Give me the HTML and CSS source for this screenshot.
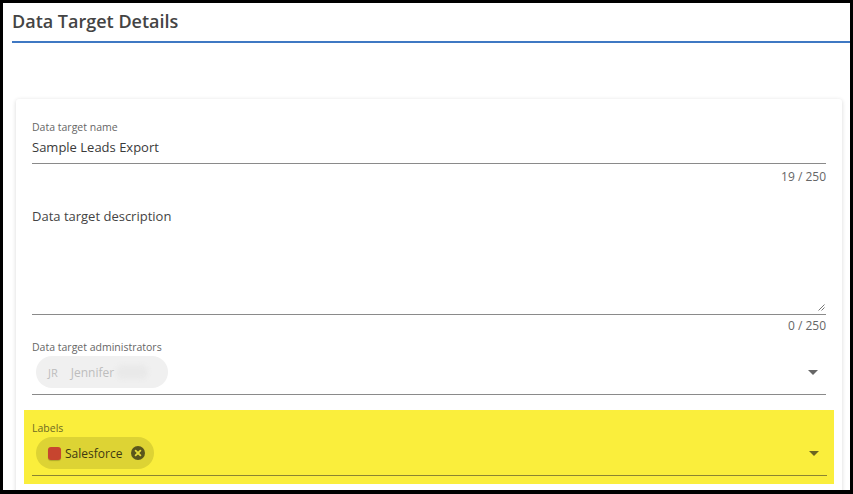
FILE: index.html
```html
<!DOCTYPE html>
<html lang="en">
<head>
    <meta charset="UTF-8">
    <title>Data Target Details</title>
    <link rel="stylesheet" href="styles.css">
</head>
<body>

<div class="frame">
    <header class="page-head">
        <h1>Data Target Details</h1>
    </header>

    <section class="card">
        <div class="field">
            <div class="field-label">Data target name</div>
            <div class="field-input">Sample Leads Export</div>
        </div>
        <div class="hint hint-first">19 / 250</div>

        <div class="field field-area">
            <div class="placeholder">Data target description</div>
            <svg class="grip" width="7" height="7" viewBox="0 0 7 7">
                <path d="M6.5 0.5 L0.5 6.5 M6.5 3.5 L3.5 6.5" stroke="#777" stroke-width="1"/>
            </svg>
        </div>
        <div class="hint hint-second">0 / 250</div>

        <div class="field field-select field-admins">
            <div class="field-label">Data target administrators</div>
            <div class="select-row">
                <span class="chip chip-user">
                    <span class="initials">JR</span>
                    <span class="chip-name">Jennifer</span>
                    <span class="blurred"></span>
                </span>
                <span class="caret"></span>
            </div>
        </div>

        <div class="highlight">
            <div class="field field-select">
                <div class="field-label">Labels</div>
                <div class="select-row">
                    <span class="chip chip-label">
                        <span class="swatch"></span>
                        <span class="chip-name">Salesforce</span>
                        <svg class="remove" width="14" height="14" viewBox="0 0 14 14">
                            <circle cx="7" cy="7" r="7" fill="#5a561c"/>
                            <path d="M4.6 4.6 L9.4 9.4 M9.4 4.6 L4.6 9.4" stroke="#e3d93a" stroke-width="1.8" stroke-linecap="round"/>
                        </svg>
                    </span>
                    <span class="caret"></span>
                </div>
            </div>
        </div>
    </section>
</div>

</body>
</html>
```

FILE: styles.css
```css
html, body {
    margin: 0;
    padding: 0;
}

body {
    background: #000;
    font-family: "Open Sans", "Liberation Sans", Arial, sans-serif;
    color: #333;
}

.frame {
    box-sizing: border-box;
    width: 853px;
    height: 494px;
    border: 3px solid #000;
    border-bottom-width: 4px;
    background: #fff;
    overflow: hidden;
}

.page-head {
    margin-left: 9px;
    padding: 6px 0 8px 0;
    border-bottom: 2px solid #3f78c3;
}

.page-head h1 {
    margin: 0;
    font-size: 18px;
    line-height: 24px;
    font-weight: 600;
    color: #444;
}

.card {
    margin: 56px 8px 0 13px;
    padding: 21px 16px 40px 16px;
    background: #fff;
    box-shadow: 0 1px 4px rgba(0, 0, 0, 0.16);
    border-radius: 3px;
}

.field {
    border-bottom: 1px solid #8a8a8a;
}

.field-label {
    font-size: 10.5px;
    line-height: 14px;
    color: #666;
}

.field-input {
    margin-top: 3px;
    padding-bottom: 6px;
    font-size: 13px;
    line-height: 20px;
    color: #3a3a3a;
}

.hint {
    text-align: right;
    font-size: 12px;
    line-height: 14px;
    color: #666;
}

.hint-first {
    margin-top: 6px;
}

.field-area {
    position: relative;
    margin-top: 22px;
    height: 108px;
}

.placeholder {
    font-size: 13px;
    line-height: 20px;
    color: #444;
}

.grip {
    position: absolute;
    right: 1px;
    bottom: 3px;
}

.hint-second {
    margin-top: 4px;
}

.field-admins {
    margin-top: 7px;
}

.select-row {
    display: flex;
    align-items: center;
    justify-content: space-between;
    margin-top: 2px;
    padding: 0 0 6px 4px;
}

.chip {
    display: inline-flex;
    align-items: center;
    height: 32px;
    border-radius: 16px;
    padding: 0 14px 0 12px;
    font-size: 12px;
}

.chip-user {
    background: #f0f0f0;
    color: #bdbdbd;
}

.initials {
    font-size: 11px;
    margin-right: 13px;
}

.blurred {
    display: inline-block;
    width: 32px;
    height: 14px;
    margin-left: 2px;
    margin-right: 6px;
    background: #e9e9e9;
    border-radius: 7px;
    filter: blur(2px);
}

.caret {
    width: 0;
    height: 0;
    margin-right: 8px;
    border-left: 5px solid transparent;
    border-right: 5px solid transparent;
    border-top: 5px solid #666;
}

.highlight {
    margin: 15px -8px 0 -8px;
    padding: 11px 7px 8px 8px;
    background: #faee3c;
}

.highlight .field {
    border-bottom-color: #8b8431;
}

.highlight .field-label {
    color: #6e6a24;
}

.chip-label {
    background: #ddd334;
    color: #3d3a12;
    padding-right: 9px;
}

.swatch {
    width: 13px;
    height: 13px;
    border-radius: 3px;
    background: #c7452f;
    box-shadow: 0 1px 1px rgba(0, 0, 0, 0.2);
    margin-right: 4px;
}

.remove {
    margin-left: 9px;
}

.highlight .caret {
    border-top-color: #6b6520;
}
```
